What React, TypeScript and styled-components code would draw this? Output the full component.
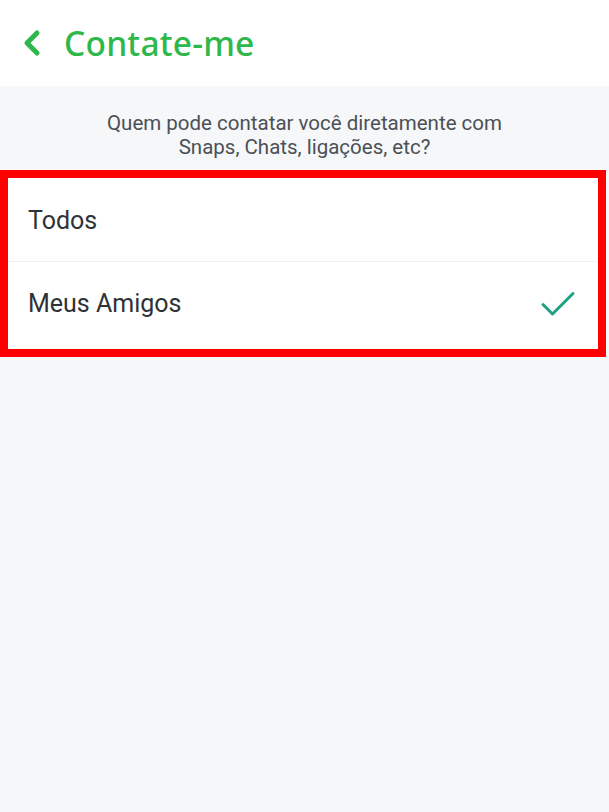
import React from "react";
import styled, { createGlobalStyle } from "styled-components";

const Global = createGlobalStyle`
  html, body { margin: 0; padding: 0; background: #f6f7f9; }
  body { font-family: Roboto, "Noto Sans", sans-serif; }
`;

const Page = styled.div`
  width: 609px;
  min-height: 812px;
  background: #f6f7f9;
  display: flex;
  flex-direction: column;
`;

const Header = styled.header`
  height: 86px;
  background: #ffffff;
  display: flex;
  align-items: center;
  padding-left: 22px;
  gap: 22px;
  box-sizing: border-box;
`;

const Title = styled.h1`
  margin: 0;
  font-family: "Noto Sans", sans-serif;
  font-weight: 500;
  font-size: 33.5px;
  color: #2eb84b;
  letter-spacing: 0.2px;
`;

const Subtitle = styled.p`
  margin: 25px 0 0;
  text-align: center;
  font-family: Roboto, sans-serif;
  font-size: 20.5px;
  line-height: 24px;
  color: #4b5056;
`;

const Card = styled.section`
  margin: 11px 3px 0 0;
  border: 8px solid #ff0000;
  background: #ffffff;
  display: flex;
  flex-direction: column;
`;

const Row = styled.div<{ $divider?: boolean }>`
  height: ${(p) => (p.$divider ? "84px" : "87px")};
  display: flex;
  align-items: center;
  justify-content: space-between;
  padding: ${(p) => (p.$divider ? "2px 22px 0 20px" : "0 22px 4px 20px")};
  box-sizing: border-box;
  border-bottom: ${(p) => (p.$divider ? "1px solid #f0f1f3" : "none")};
  font-family: Roboto, sans-serif;
  font-size: 25px;
  color: #2f3236;
`;

const Check = () => (
  <svg width="36" height="28" viewBox="0 0 36 28" fill="none">
    <path d="M3 14.5 L12.5 24 L33 3.5" stroke="#1fa184" strokeWidth="3" strokeLinecap="round" strokeLinejoin="round" />
  </svg>
);

const Back = () => (
  <svg width="20" height="28" viewBox="0 0 20 28" fill="none">
    <path d="M15 4 L5 14 L15 24" stroke="#2eb84b" strokeWidth="5" strokeLinecap="round" strokeLinejoin="round" />
  </svg>
);

export default function App() {
  return (
    <Page>
      <Global />
      <Header>
        <Back />
        <Title>Contate-me</Title>
      </Header>
      <Subtitle>
        Quem pode contatar você diretamente com
        <br />
        Snaps, Chats, ligações, etc?
      </Subtitle>
      <Card>
        <Row $divider>Todos</Row>
        <Row>
          Meus Amigos
          <Check />
        </Row>
      </Card>
    </Page>
  );
}
